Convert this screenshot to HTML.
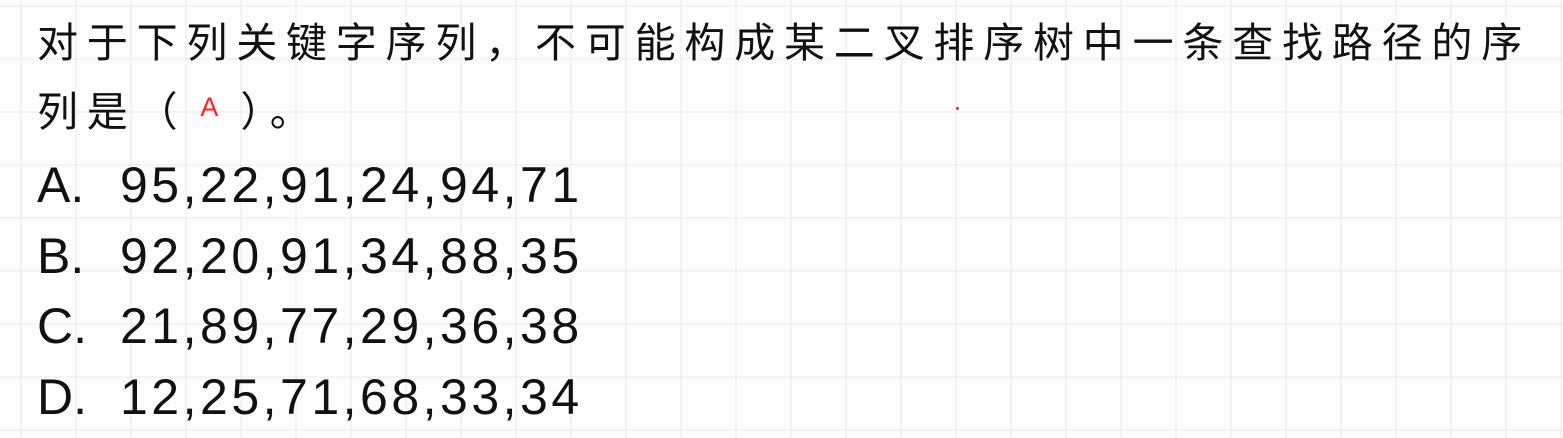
<!DOCTYPE html>
<html><head><meta charset="utf-8"><style>
html,body{margin:0;padding:0}
body{width:1563px;height:438px;overflow:hidden;background:#fdfdfd;position:relative;
background-image:linear-gradient(to right,rgba(0,0,0,0.035) 2px,transparent 2px),linear-gradient(to bottom,rgba(0,0,0,0.035) 2px,transparent 2px);
background-size:55px 53px;background-position:20px 5px;font-family:"Liberation Sans","Noto Sans CJK SC",sans-serif;color:#111}
.l{position:absolute;left:37px;white-space:nowrap;font-family:"Noto Sans CJK SC",sans-serif;font-size:41px;letter-spacing:8.8px;font-weight:400;line-height:1}
.o{position:absolute;left:37px;white-space:nowrap;font-size:50px;line-height:1}
.o span{position:absolute;left:83px;letter-spacing:3.5px}
</style></head><body>
<div class="l" style="top:19px">对于下列关键字序列，不可能构成某二叉排序树中一条查找路径的序</div>
<div class="l" style="top:88px">列是（<span style="color:#f22;font-family:'Liberation Sans';font-size:27px;font-weight:400;position:relative;top:-10px;margin:0 22px 0 14px;letter-spacing:0">A</span>）。</div>
<div class="o" style="top:160px">A.<span>95,22,91,24,94,71</span></div>
<div class="o" style="top:231px">B.<span>92,20,91,34,88,35</span></div>
<div class="o" style="top:301px">C.<span>21,89,77,29,36,38</span></div>
<div class="o" style="top:372px">D.<span>12,25,71,68,33,34</span></div>
<div style="position:absolute;left:956px;top:107px;width:3px;height:3px;background:#c33;border-radius:50%"></div>
</body></html>
